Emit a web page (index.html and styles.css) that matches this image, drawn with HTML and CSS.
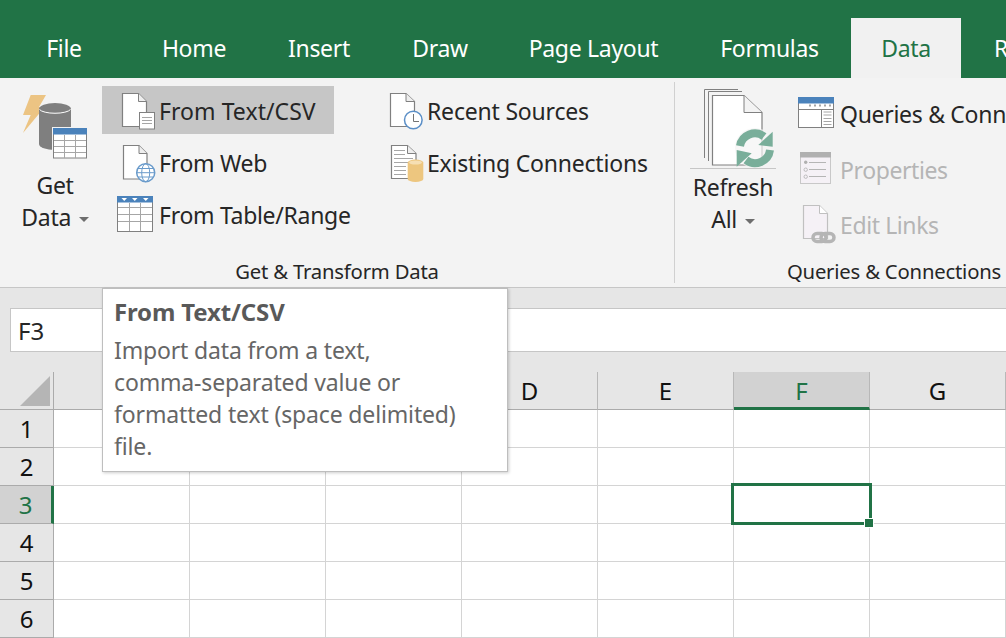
FILE: index.html
```html
<!DOCTYPE html>
<html lang="en">
<head>
    <meta charset="UTF-8">
    <meta name="viewport" content="width=device-width, initial-scale=1.0">
    <title>Excel Data Ribbon</title>
    <link rel="stylesheet" href="styles.css">
</head>
<body>
    <nav class="tabs">
        <div class="tab tab-file">File</div>
        <div class="tab tab-home">Home</div>
        <div class="tab tab-insert">Insert</div>
        <div class="tab tab-draw">Draw</div>
        <div class="tab tab-layout">Page Layout</div>
        <div class="tab tab-formulas">Formulas</div>
        <div class="tab tab-active">Data</div>
        <div class="tab tab-review">Review</div>
    </nav>

    <section class="ribbon">
        <div class="group group-transform">
            <div class="group-body">
                <div class="big-btn big-get">
                    <svg class="icon-get" width="66" height="66" viewBox="0 0 66 66">
                        <polygon points="8.7,1 24,1 17,13 22.7,13 1,39 8.7,21 1,21" fill="#ecc483"/>
                        <path d="M17 15 A16 6 0 0 1 49 15 V50 A16 6 0 0 1 17 50 Z" fill="#7f7f7f"/>
                        <path d="M17.500 15.500 A16 5 0 0 0 48.500 15.500" fill="none" stroke="#fff" stroke-width="1"/>
                        <rect x="30" y="33" width="36" height="33" fill="#f3f3f3"/>
                        <rect x="31.500" y="34.500" width="33" height="29.500" fill="#fff" stroke="#808080" stroke-width="1"/>
                        <rect x="31" y="34" width="34" height="6.500" fill="#4a82bb"/>
                        <path d="M32 46.500 H64 M32 52.500 H64 M32 58.500 H64 M42.500 41 V64 M53.500 41 V64" stroke="#a6a6a6" stroke-width="1"/>
                    </svg>
                    <span class="big-label">Get</span>
                    <span class="big-label">Data <i class="caret"></i></span>
                </div>

                <div class="btn-col col-from">
                    <div class="btn btn-hover">
                        <svg class="icon" width="38" height="38" viewBox="0 0 38 38">
                            <path d="M5.500 2.500 H21.500 L29.500 10.500 V35.500 H5.500 Z" fill="#fff" stroke="#808080" stroke-width="1.200"/>
                            <path d="M21.500 2.500 V10.500 H29.500" fill="#eee" stroke="#808080" stroke-width="1"/>
                            <rect x="22.500" y="21.500" width="15" height="16.500" fill="#fff" stroke="#808080" stroke-width="1"/>
                            <path d="M25 26.500 H35 M25 29.500 H35 M25 32.500 H35" stroke="#a6a6a6" stroke-width="1"/>
                        </svg>
                        <span>From Text/CSV</span>
                    </div>
                    <div class="btn">
                        <svg class="icon" width="38" height="38" viewBox="0 0 38 38">
                            <path d="M6.500 2.500 H22 L30 10.500 V36 H6.500 Z" fill="#fff" stroke="#808080" stroke-width="1.200"/>
                            <path d="M22 2.500 V10.500 H30" fill="#eee" stroke="#808080" stroke-width="1"/>
                            <circle cx="28.700" cy="29.700" r="9" fill="#fff" stroke="#6a9bcb" stroke-width="1.500"/>
                            <path d="M19.700 29.700 H37.700 M21 25.500 H36.400 M21 34 H36.400" stroke="#6a9bcb" stroke-width="1"/>
                            <ellipse cx="28.700" cy="29.700" rx="4" ry="9" fill="none" stroke="#6a9bcb" stroke-width="1"/>
                        </svg>
                        <span>From Web</span>
                    </div>
                    <div class="btn">
                        <svg class="icon" width="38" height="38" viewBox="0 0 38 38">
                            <rect x="0.500" y="1.500" width="35" height="35" fill="#fff" stroke="#808080" stroke-width="1"/>
                            <rect x="0" y="1" width="36" height="6.500" fill="#4a82bb"/>
                            <polygon points="4.500,3 10,3 7.250,6" fill="#fff"/>
                            <polygon points="15,3 20.500,3 17.750,6" fill="#fff"/>
                            <polygon points="26,3 31.500,3 28.750,6" fill="#fff"/>
                            <path d="M1 12.500 H35 M1 19.500 H35 M1 26.500 H35 M12.500 8 V36 M23.500 8 V36" stroke="#a6a6a6" stroke-width="1"/>
                        </svg>
                        <span>From Table/Range</span>
                    </div>
                </div>

                <div class="btn-col col-recent">
                    <div class="btn">
                        <svg class="icon" width="38" height="38" viewBox="0 0 38 38">
                            <path d="M4.500 2.500 H20 L28.500 10.500 V35.500 H4.500 Z" fill="#fff" stroke="#808080" stroke-width="1.200"/>
                            <path d="M20 2.500 V10.500 H28.500" fill="#eee" stroke="#808080" stroke-width="1"/>
                            <circle cx="27.300" cy="29" r="8.800" fill="#fff" stroke="#5b8fc7" stroke-width="1.500"/>
                            <path d="M27.500 23 V30.500 H33" fill="none" stroke="#737373" stroke-width="1"/>
                        </svg>
                        <span>Recent Sources</span>
                    </div>
                    <div class="btn">
                        <svg class="icon" width="38" height="38" viewBox="0 0 38 38">
                            <path d="M5.500 2.500 H21.500 L30 10.500 V35.500 H5.500 Z" fill="#fff" stroke="#808080" stroke-width="1.200"/>
                            <path d="M21.500 2.500 V10.500 H30" fill="#eee" stroke="#808080" stroke-width="1"/>
                            <path d="M8 7.500 H19 M8 11.500 H19 M8 15.500 H27 M8 19.500 H27 M8 23.500 H20 M8 27.500 H20 M8 31.500 H20" stroke="#a6a6a6" stroke-width="1"/>
                            <path d="M21.700 19.500 A7.800 3 0 0 1 37.300 19.500 V36 A7.800 3 0 0 1 21.700 36 Z" fill="#edc67f"/>
                            <ellipse cx="29.500" cy="19.500" rx="6.500" ry="2" fill="#f6dfb4"/>
                        </svg>
                        <span>Existing Connections</span>
                    </div>
                </div>
            </div>
            <div class="group-label">Get &amp; Transform Data</div>
        </div>

        <div class="group group-queries">
            <div class="group-body">
                <div class="big-btn big-refresh">
                    <svg class="icon-refresh" width="86" height="80" viewBox="0 0 86 80">
                        <path d="M14.500 70 V1.500 H48" fill="none" stroke="#808080" stroke-width="1"/>
                        <path d="M18.500 73 V3.500 H52" fill="none" stroke="#808080" stroke-width="1"/>
                        <path d="M22.500 77 V7.500 H54 L72 24.500 V77 Z" fill="#fff" stroke="#808080" stroke-width="1.200"/>
                        <path d="M54 7.500 V24.500 H72" fill="#f3f3f3" stroke="#808080" stroke-width="1"/>
                        <circle cx="65" cy="60" r="20" fill="#f3f3f3" opacity="0.700"/>
                        <path d="M50 58 A15 15 0 0 1 74 48.500" fill="none" stroke="#79ae9a" stroke-width="8"/>
                        <polygon points="82.700,43.700 82.700,58.700 68.300,57" fill="#79ae9a"/>
                        <path d="M80 62 A15 15 0 0 1 56 72" fill="none" stroke="#79ae9a" stroke-width="8"/>
                        <polygon points="46.700,62 61.700,65.300 46.700,78.700" fill="#79ae9a"/>
                    </svg>
                    <span class="big-label">Refresh</span>
                    <span class="big-label">All <i class="caret"></i></span>
                </div>

                <div class="btn-col col-queries">
                    <div class="btn btn-tall">
                        <svg class="icon" width="38" height="38" viewBox="0 0 38 38">
                            <rect x="0.500" y="1.500" width="35" height="30" fill="#fff" stroke="#808080" stroke-width="1"/>
                            <rect x="0" y="1" width="36" height="6.500" fill="#4a82bb"/>
                            <path d="M1 13.500 H35 M23.500 13.500 V31" stroke="#808080" stroke-width="1"/>
                            <path d="M25.500 16 H33.500 M25.500 19 H33.500 M25.500 22.500 H33.500 M25.500 25.500 H33.500 M25.500 28.500 H33.500" stroke="#a6a6a6" stroke-width="1"/>
                            <path d="M11 9.500 H33" stroke="#a6a6a6" stroke-width="2" stroke-dasharray="2 3"/>
                        </svg>
                        <span>Queries &amp; Connections</span>
                    </div>
                    <div class="btn btn-tall btn-off">
                        <svg class="icon" width="38" height="38" viewBox="0 0 38 38">
                            <rect x="2.500" y="1.500" width="30" height="31" fill="#f5f1f6" stroke="#c8c8c8" stroke-width="1"/>
                            <rect x="2" y="1" width="31" height="5.500" fill="#b0b0b0"/>
                            <circle cx="7.700" cy="11.300" r="1.700" fill="#b0b0b0"/>
                            <circle cx="7.700" cy="18.700" r="1.700" fill="none" stroke="#b0b0b0" stroke-width="0.800"/>
                            <circle cx="7.700" cy="25.700" r="1.700" fill="none" stroke="#b0b0b0" stroke-width="0.800"/>
                            <path d="M11 11.500 H28 M11 18.500 H28 M11 25.500 H28" stroke="#b5b5b5" stroke-width="1"/>
                        </svg>
                        <span>Properties</span>
                    </div>
                    <div class="btn btn-tall btn-off">
                        <svg class="icon" width="38" height="38" viewBox="0 0 38 38">
                            <path d="M5.500 -0.500 H21.500 L29.500 7.500 V32.500 H5.500 Z" fill="#f5f1f6" stroke="#c0c0c0" stroke-width="1.200"/>
                            <path d="M21.500 -0.500 V7.500 H29.500" fill="#fff" stroke="#c0c0c0" stroke-width="1"/>
                            <rect x="15" y="27.500" width="13" height="8" rx="4" fill="none" stroke="#b5b5b5" stroke-width="3.500"/>
                            <rect x="23" y="27.500" width="13" height="8" rx="4" fill="none" stroke="#b5b5b5" stroke-width="3.500"/>
                        </svg>
                        <span>Edit Links</span>
                    </div>
                </div>
            </div>
            <div class="group-label">Queries &amp; Connections</div>
        </div>
    </section>

    <div class="formula-bar">
        <div class="name-box">F3</div>
    </div>

    <div class="sheet">
        <div class="corner"><div class="corner-mark"></div></div>
        <div class="col-head">A</div>
        <div class="col-head">B</div>
        <div class="col-head">C</div>
        <div class="col-head">D</div>
        <div class="col-head">E</div>
        <div class="col-head col-selected">F</div>
        <div class="col-head">G</div>

        <div class="row-head">1</div>
        <div class="cell"></div><div class="cell"></div><div class="cell"></div><div class="cell"></div><div class="cell"></div><div class="cell"></div><div class="cell"></div>
        <div class="row-head">2</div>
        <div class="cell"></div><div class="cell"></div><div class="cell"></div><div class="cell"></div><div class="cell"></div><div class="cell"></div><div class="cell"></div>
        <div class="row-head row-selected">3</div>
        <div class="cell"></div><div class="cell"></div><div class="cell"></div><div class="cell"></div><div class="cell"></div><div class="cell"></div><div class="cell"></div>
        <div class="row-head">4</div>
        <div class="cell"></div><div class="cell"></div><div class="cell"></div><div class="cell"></div><div class="cell"></div><div class="cell"></div><div class="cell"></div>
        <div class="row-head">5</div>
        <div class="cell"></div><div class="cell"></div><div class="cell"></div><div class="cell"></div><div class="cell"></div><div class="cell"></div><div class="cell"></div>
        <div class="row-head">6</div>
        <div class="cell"></div><div class="cell"></div><div class="cell"></div><div class="cell"></div><div class="cell"></div><div class="cell"></div><div class="cell"></div>
    </div>

    <div class="selection"><div class="fill-handle"></div></div>

    <div class="tooltip">
        <h2>From Text/CSV</h2>
        <p>Import data from a text,<br>comma-separated value or<br>formatted text (space delimited)<br>file.</p>
    </div>
</body>
</html>
```

FILE: styles.css
```css
body {
    font-family: 'Noto Sans', 'Open Sans', sans-serif;
    font-size: 23px;
    letter-spacing: -0.3px;
    color: #262626;
    background-color: #fff;
    margin: 0;
    padding: 0;
    width: 1006px;
    height: 638px;
    overflow: hidden;
    position: relative;
}

/* tabs */
.tabs {
    display: flex;
    height: 60px;
    padding-top: 18px;
    background-color: #217346;
    white-space: nowrap;
}

.tab {
    flex: none;
    box-sizing: border-box;
    color: #fff;
    line-height: 60px;
    text-align: center;
}

.tab-file { width: 128px; }
.tab-home { width: 132px; }
.tab-insert { width: 118px; }
.tab-draw { width: 124px; }
.tab-layout { width: 183px; }
.tab-formulas { width: 166px; padding-left: 3px; }

.tab-active {
    width: 110px;
    background-color: #f1f1f1;
    color: #217346;
}

.tab-review {
    padding-left: 33px;
}

/* ribbon */
.ribbon {
    display: flex;
    height: 201px;
    padding-top: 4px;
    padding-bottom: 4px;
    background-color: #f3f3f3;
    border-bottom: 1px solid #c6c6c6;
    line-height: 32px;
    white-space: nowrap;
}

.group {
    display: flex;
    flex-direction: column;
    flex: none;
}

.group-transform {
    width: 674px;
    border-right: 1px solid #d0d0d0;
}

.group-queries {
    width: 438px;
}

.group-body {
    display: flex;
    flex: 1;
    padding-top: 4px;
}

.group-label {
    height: 24px;
    line-height: 24px;
    font-size: 20.300px;
    letter-spacing: -0.2px;
    text-align: center;
}

.big-btn {
    display: flex;
    flex-direction: column;
    align-items: center;
    flex: none;
}

.big-get {
    width: 94px;
    margin-left: 8px;
    padding-top: 8px;
}

.icon-get {
    margin-bottom: 9px;
}

.big-refresh {
    width: 86px;
    margin-left: 15px;
    padding-top: 2px;
}

.icon-refresh {
    border-bottom: 1px solid #c6c6c6;
    margin-bottom: 2px;
}

.caret {
    display: inline-block;
    width: 0;
    height: 0;
    margin-left: 2px;
    vertical-align: middle;
    border-left: 5px solid transparent;
    border-right: 5px solid transparent;
    border-top: 5px solid #6d6d6d;
}

.btn-col {
    display: flex;
    flex-direction: column;
    align-items: flex-start;
    gap: 4px;
}

.col-from {
    width: 270px;
}

.col-queries {
    margin-left: 22px;
    margin-top: 2px;
    gap: 1px;
}

.btn {
    display: flex;
    align-items: center;
    gap: 4px;
    height: 48px;
    padding: 0 18px 0 15px;
}

.btn span {
    margin-top: 2px;
}

.col-recent {
    letter-spacing: -0.2px;
}

.col-recent .btn {
    padding-left: 14px;
    gap: 3px;
}

.btn-tall {
    height: 54px;
    padding: 0;
}

.btn-tall span {
    margin-top: -2px;
}

.btn-hover {
    background-color: #c6c6c6;
    letter-spacing: 0.05px;
}

.btn-off {
    color: #b5b5b5;
    letter-spacing: -0.4px;
}

.btn-off span {
    margin-top: 0;
}

svg {
    display: block;
    overflow: visible;
    flex: none;
}

/* formula bar */
.formula-bar {
    height: 64px;
    padding: 20px 0 0 10px;
    background-color: #e6e6e6;
}

.name-box {
    height: 42px;
    padding-left: 7px;
    line-height: 44px;
    font-size: 24px;
    letter-spacing: 0;
    background-color: #fff;
    border: 1px solid #c6c6c6;
    border-right: none;
}

/* sheet */
.sheet {
    display: grid;
    grid-template-columns: 54px repeat(7, 136px);
    grid-auto-rows: 38px;
    font-size: 24px;
    letter-spacing: 0;
    color: #111;
    line-height: 38px;
}

.corner {
    background-color: #e6e6e6;
    border-right: 1px solid #ababab;
    border-bottom: 1px solid #ababab;
    display: flex;
    align-items: flex-end;
    justify-content: flex-end;
    padding: 0 3px 3px 0;
    box-sizing: border-box;
}

.corner-mark {
    width: 30px;
    height: 30px;
    background-color: #b5b5b5;
    clip-path: polygon(100% 0, 100% 100%, 0 100%);
}

.col-head {
    background-color: #e6e6e6;
    border-right: 1px solid #b8b8b8;
    border-bottom: 1px solid #ababab;
    box-sizing: border-box;
    text-align: center;
}

.col-selected {
    background-color: #d2d2d2;
    color: #217346;
    border-bottom: 3px solid #217346;
}

.row-head {
    background-color: #e6e6e6;
    border-right: 1px solid #ababab;
    border-bottom: 1px solid #ababab;
    box-sizing: border-box;
    text-align: center;
}

.row-selected {
    background-color: #d2d2d2;
    color: #217346;
    border-right: 3px solid #217346;
}

.cell {
    border-right: 1px solid #d4d4d4;
    border-bottom: 1px solid #d4d4d4;
    box-sizing: border-box;
}

.selection {
    position: absolute;
    left: 731px;
    top: 483px;
    width: 135px;
    height: 36px;
    border: 3px solid #217346;
}

.fill-handle {
    position: absolute;
    right: -5px;
    bottom: -6px;
    width: 8px;
    height: 8px;
    background-color: #217346;
    border: 1px solid #fff;
}

/* tooltip */
.tooltip {
    position: absolute;
    left: 102px;
    top: 288px;
    width: 381px;
    height: 170px;
    padding: 6px 12px 6px 11px;
    background-color: #fff;
    border: 1px solid #bebebe;
    box-shadow: 1px 1px 3px rgba(0, 0, 0, 0.2);
    color: #666;
    letter-spacing: -0.15px;
}

.tooltip h2 {
    margin: 0 0 5px 0;
    font-size: 24px;
    font-weight: 700;
    line-height: 34px;
    color: #595959;
}

.tooltip p {
    margin: 0;
    line-height: 32px;
}
```
